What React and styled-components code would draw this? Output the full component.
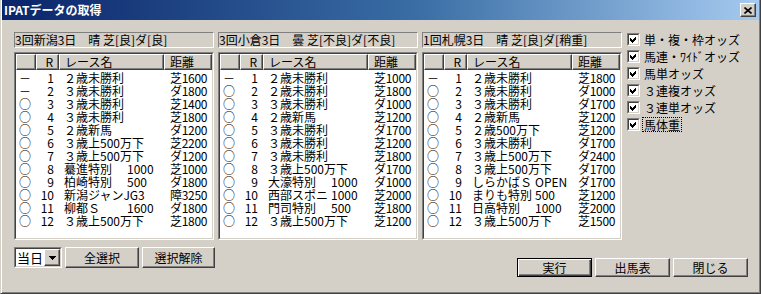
import React from 'react'
import styled, { createGlobalStyle } from 'styled-components'

const FONT = `"Noto Sans CJK JP", "Noto Sans", sans-serif`

const GlobalStyle = createGlobalStyle`
    html, body {
        margin: 0;
        padding: 0;
        background: #d4d0c8;
    }
    body {
        font-family: ${FONT};
        font-size: 12px;
        color: #000;
    }
`

const COLS = '20px 23px 105px 48px'

const Window = styled.div`
    width: 761px;
    height: 294px;
    box-sizing: border-box;
    background: #d4d0c8;
    border-left: 1px solid #d4d0c8;
    border-right: 1px solid #404040;
    border-bottom: 1px solid #404040;
    box-shadow: inset 1px 0 #fff, inset -1px -1px #808080;
    padding: 0 1px 1px 1px;
    display: flex;
    flex-direction: column;
`

const TitleBar = styled.div`
    height: 20px;
    flex: none;
    display: flex;
    align-items: center;
    justify-content: space-between;
    padding: 0 3px 0 2px;
    background: linear-gradient(to right, #0a246a 0%, #3a6ea5 55%, #a6caf0 100%);
    color: #fff;
    font-weight: bold;
    font-size: 12px;
    line-height: 20px;
`

const CloseButton = styled.div`
    width: 16px;
    height: 14px;
    box-sizing: border-box;
    background: #d4d0c8;
    border: 1px solid;
    border-color: #fff #404040 #404040 #fff;
    box-shadow: inset -1px -1px #808080;
    display: flex;
    align-items: center;
    justify-content: center;
`

const Body = styled.div`
    flex: 1;
    display: flex;
    flex-direction: column;
    padding: 12px 11px 0 12px;
`

const TopRow = styled.div`
    display: flex;
    align-items: flex-start;
`

const Panels = styled.div`
    display: flex;
    gap: 4px;
`

const Panel = styled.div`
    width: 200px;
    display: flex;
    flex-direction: column;
    gap: 4px;
`

const PanelLabel = styled.div`
    height: 16px;
    box-sizing: border-box;
    border: 1px solid;
    border-color: #808080 #fff #fff #808080;
    white-space: pre;
    overflow: hidden;
    line-height: 14px;
    font-size: 12px;
`

const ListOuter = styled.div`
    height: 188px;
    box-sizing: border-box;
    border: 1px solid;
    border-color: #808080 #fff #fff #808080;
`

const ListInner = styled.div`
    height: 100%;
    box-sizing: border-box;
    border: 1px solid;
    border-color: #404040 #d4d0c8 #d4d0c8 #404040;
    background: #fff;
    overflow: hidden;
`

const HeaderRow = styled.div`
    display: grid;
    grid-template-columns: ${COLS};
    height: 16px;
`

const HeaderCell = styled.div`
    box-sizing: border-box;
    background: #d4d0c8;
    border: 1px solid;
    border-color: #fff #404040 #404040 #fff;
    box-shadow: inset -1px -1px #808080;
    padding: 0 5px;
    text-align: ${p => p.$align || 'left'};
    line-height: 13px;
    white-space: nowrap;
`

const Rows = styled.div`
    padding-top: 1px;
`

const Row = styled.div`
    display: grid;
    grid-template-columns: ${COLS};
    height: 13px;
    line-height: 13px;
    white-space: nowrap;
`

const MarkCell = styled.div`
    padding-left: 3px;
`

const NumCell = styled.div`
    text-align: right;
    padding-right: 5px;
`

const NameCell = styled.div`
    display: flex;
    padding-left: 5px;
`

const NameMain = styled.span`
    width: ${p => (p.$fixed ? '63px' : 'auto')};
    flex: none;
`

const DistCell = styled.div`
    padding-left: 6px;
    letter-spacing: -0.3px;
`

const Options = styled.div`
    margin-left: 5px;
    padding-top: 1px;
    display: flex;
    flex-direction: column;
    gap: 4px;
`

const Option = styled.label`
    display: flex;
    align-items: center;
    gap: 3px;
    height: 13px;
    line-height: 13px;
    white-space: nowrap;
`

const CheckBox = styled.span`
    width: 13px;
    height: 13px;
    box-sizing: border-box;
    border: 1px solid;
    border-color: #808080 #fff #fff #808080;
    flex: none;
`

const CheckInner = styled.span`
    display: flex;
    align-items: center;
    justify-content: center;
    width: 100%;
    height: 100%;
    box-sizing: border-box;
    border: 1px solid;
    border-color: #404040 #d4d0c8 #d4d0c8 #404040;
    background: #fff;
`

const OptionText = styled.span`
    outline: ${p => (p.$focus ? '1px dotted #000' : 'none')};
    padding: 0 1px;
`

const BottomRow = styled.div`
    display: flex;
    justify-content: space-between;
    align-items: flex-start;
    padding-top: 7px;
`

const LeftGroup = styled.div`
    display: flex;
    gap: 3px;
`

const RightGroup = styled.div`
    display: flex;
    gap: 3px;
    margin-top: 11px;
`

const Combo = styled.div`
    width: 48px;
    height: 21px;
    box-sizing: border-box;
    border: 1px solid;
    border-color: #808080 #fff #fff #808080;
`

const ComboInner = styled.div`
    height: 100%;
    box-sizing: border-box;
    border: 1px solid;
    border-color: #404040 #d4d0c8 #d4d0c8 #404040;
    background: #fff;
    display: flex;
    align-items: stretch;
    justify-content: space-between;
    line-height: 17px;
    padding-left: 1px;
    font-size: 13px;
`

const ComboArrow = styled.div`
    width: 16px;
    box-sizing: border-box;
    background: #d4d0c8;
    border: 1px solid;
    border-color: #fff #404040 #404040 #fff;
    box-shadow: inset -1px -1px #808080;
    display: flex;
    align-items: center;
    justify-content: center;
`

const Button = styled.div`
    width: ${p => p.$w}px;
    height: ${p => p.$h}px;
    box-sizing: border-box;
    background: #d4d0c8;
    border: 1px solid;
    border-color: ${p => (p.$default ? '#000' : '#fff #404040 #404040 #fff')};
    box-shadow: ${p => (p.$default
        ? 'inset 1px 1px #fff, inset -1px -1px #404040, inset -2px -2px #808080'
        : 'inset -1px -1px #808080')};
    display: flex;
    align-items: center;
    justify-content: center;
    line-height: 14px;
`

const DASH = '－'
const CIRCLE = '○'

const meetings = [
    {
        label: '3回新潟3日\u2002\u2002晴 芝[良]ダ[良]',
        races: [
            [DASH, '２歳未勝利', '', '芝1600'],
            [DASH, '３歳未勝利', '', 'ダ1800'],
            [CIRCLE, '３歳未勝利', '', '芝1400'],
            [CIRCLE, '３歳未勝利', '', '芝1800'],
            [CIRCLE, '２歳新馬', '', 'ダ1200'],
            [CIRCLE, '３歳上500万下', '', '芝2200'],
            [CIRCLE, '３歳上500万下', '', 'ダ1200'],
            [CIRCLE, '驀進特別', '1000', '芝1000'],
            [CIRCLE, '柏崎特別', '500', 'ダ1800'],
            [CIRCLE, '新潟ジャンJG3', '', '障3250'],
            [CIRCLE, '柳都Ｓ', '1600', 'ダ1800'],
            [CIRCLE, '３歳上500万下', '', '芝1800'],
        ],
    },
    {
        label: '3回小倉3日\u2002\u2002曇 芝[不良]ダ[不良]',
        races: [
            [DASH, '２歳未勝利', '', '芝1000'],
            [CIRCLE, '２歳未勝利', '', '芝1800'],
            [CIRCLE, '３歳未勝利', '', 'ダ1000'],
            [CIRCLE, '２歳新馬', '', '芝1200'],
            [CIRCLE, '３歳未勝利', '', 'ダ1700'],
            [CIRCLE, '３歳未勝利', '', '芝1200'],
            [CIRCLE, '３歳未勝利', '', '芝1800'],
            [CIRCLE, '３歳上500万下', '', 'ダ1700'],
            [CIRCLE, '大濠特別', '1000', 'ダ1000'],
            [CIRCLE, '西部スポニ', '1000', '芝2000'],
            [CIRCLE, '門司特別', '500', '芝1800'],
            [CIRCLE, '３歳上500万下', '', '芝1200'],
        ],
    },
    {
        label: '1回札幌3日\u2002\u2002晴 芝[良]ダ[稍重]',
        races: [
            [DASH, '２歳未勝利', '', '芝1800'],
            [CIRCLE, '３歳未勝利', '', 'ダ1000'],
            [CIRCLE, '３歳未勝利', '', 'ダ1700'],
            [CIRCLE, '２歳新馬', '', '芝1200'],
            [CIRCLE, '２歳500万下', '', '芝1200'],
            [CIRCLE, '３歳未勝利', '', 'ダ1700'],
            [CIRCLE, '３歳上500万下', '', 'ダ2400'],
            [CIRCLE, '３歳上500万下', '', 'ダ1700'],
            [CIRCLE, 'しらかばＳ', 'OPEN', 'ダ1700'],
            [CIRCLE, 'まりも特別', '500', '芝1200'],
            [CIRCLE, '日高特別', '1000', '芝2000'],
            [CIRCLE, '３歳上500万下', '', '芝1500'],
        ],
    },
]

const options = [
    '単・複・枠オッズ',
    '馬連・ﾜｲﾄﾞオッズ',
    '馬単オッズ',
    '３連複オッズ',
    '３連単オッズ',
    '馬体重',
]

const CheckMark = () => (
    <svg width="7" height="7" viewBox="0 0 7 7" shapeRendering="crispEdges">
        <polygon points="0,2 2,4 6,0 6,3 2,7 0,5" fill="#000" />
    </svg>
)

const CloseIcon = () => (
    <svg width="8" height="7" viewBox="0 0 8 7">
        <path d="M0.5 0.5 L7.5 6.5 M7.5 0.5 L0.5 6.5" stroke="#000" strokeWidth="1.6" />
    </svg>
)

const DownArrow = () => (
    <svg width="7" height="4" viewBox="0 0 7 4" shapeRendering="crispEdges">
        <polygon points="0,0 7,0 3.5,4" fill="#000" />
    </svg>
)

const RaceList = ({ races }) => (
    <ListOuter>
        <ListInner>
            <HeaderRow>
                <HeaderCell />
                <HeaderCell $align="right">R</HeaderCell>
                <HeaderCell>レース名</HeaderCell>
                <HeaderCell>距離</HeaderCell>
            </HeaderRow>
            <Rows>
                {races.map(([mark, name, suffix, dist], i) => (
                    <Row key={i}>
                        <MarkCell>{mark}</MarkCell>
                        <NumCell>{i + 1}</NumCell>
                        <NameCell>
                            <NameMain $fixed={!!suffix}>{name}</NameMain>
                            {suffix && <span>{suffix}</span>}
                        </NameCell>
                        <DistCell>{dist}</DistCell>
                    </Row>
                ))}
            </Rows>
        </ListInner>
    </ListOuter>
)

const App = () => {
    return (
        <Window>
            <GlobalStyle />
            <TitleBar>
                <span>IPATデータの取得</span>
                <CloseButton><CloseIcon /></CloseButton>
            </TitleBar>
            <Body>
                <TopRow>
                    <Panels>
                        {meetings.map(m => (
                            <Panel key={m.label}>
                                <PanelLabel>{m.label}</PanelLabel>
                                <RaceList races={m.races} />
                            </Panel>
                        ))}
                    </Panels>
                    <Options>
                        {options.map((o, i) => (
                            <Option key={o}>
                                <CheckBox><CheckInner><CheckMark /></CheckInner></CheckBox>
                                <OptionText $focus={i === options.length - 1}>{o}</OptionText>
                            </Option>
                        ))}
                    </Options>
                </TopRow>
                <BottomRow>
                    <LeftGroup>
                        <Combo>
                            <ComboInner>
                                <span>当日</span>
                                <ComboArrow><DownArrow /></ComboArrow>
                            </ComboInner>
                        </Combo>
                        <Button $w={74} $h={21}>全選択</Button>
                        <Button $w={73} $h={21}>選択解除</Button>
                    </LeftGroup>
                    <RightGroup>
                        <Button $w={75} $h={19} $default>実行</Button>
                        <Button $w={75} $h={19}>出馬表</Button>
                        <Button $w={75} $h={19}>閉じる</Button>
                    </RightGroup>
                </BottomRow>
            </Body>
        </Window>
    )
}

export default App
